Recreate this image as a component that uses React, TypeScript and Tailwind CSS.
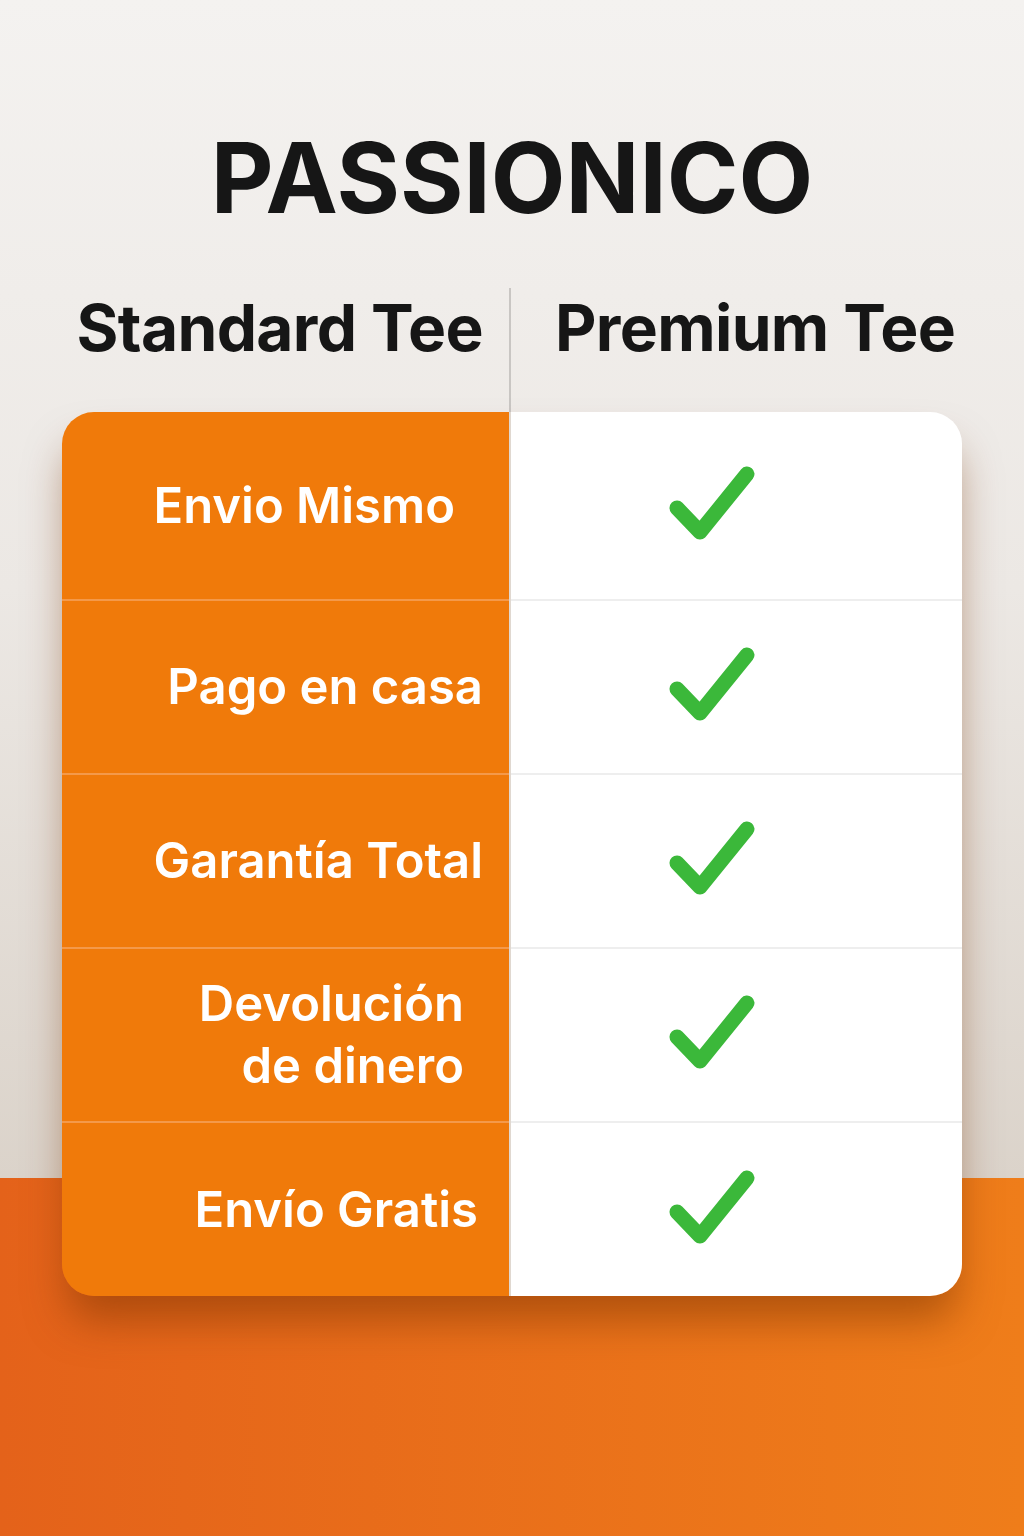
const rows = [
  { label: ["Envio Mismo"], h: "h-[187px]", pr: "pr-[54px]" },
  { label: ["Pago en casa"], h: "h-[174px]", pr: "pr-[26px]" },
  { label: ["Garantía Total"], h: "h-[174px]", pr: "pr-[26px]" },
  { label: ["Devolución", "de dinero"], h: "h-[174px]", pr: "pr-[45px]" },
  { label: ["Envío Gratis"], h: "h-[175px]", pr: "pr-[31px]" },
];

function Check() {
  return (
    <svg width="96" height="84" viewBox="0 0 96 84" className="-ml-[52px] mt-[4px]">
      <path
        d="M14 42 L37 66 L84 8"
        fill="none"
        stroke="#3bb83a"
        strokeWidth="15"
        strokeLinecap="round"
        strokeLinejoin="round"
      />
    </svg>
  );
}

export default function App() {
  return (
    <div
      className="relative w-[1024px] h-[1536px] overflow-hidden"
      style={{ fontFamily: "Inter, 'Noto Sans', sans-serif" }}
    >
      {/* background: light top, orange floor */}
      <div className="absolute inset-0 flex flex-col">
        <div className="h-[1178px] bg-gradient-to-b from-[#f4f2f0] via-[#ece8e4] to-[#dbd3ca]" />
        <div className="flex-1 bg-gradient-to-r from-[#e4621a] to-[#ef7d1a]" />
      </div>

      <div className="relative flex flex-col items-center">
        <h1 className="mt-[128px] text-[97px] leading-[100px] font-bold text-[#161616]">
          PASSIONICO
        </h1>

        <div className="mt-[60px] w-[900px] grid grid-cols-[449px_451px]">
          <div className="h-[124px] pt-[8px] text-right pr-[26px] text-[64px] leading-[64px] font-bold tracking-[-0.01em] text-[#161616] border-r-2 border-[#c9c6c3]">
            Standard Tee
          </div>
          <div className="h-[124px] pt-[8px] pl-[44px] text-[64px] leading-[64px] font-bold tracking-[-0.01em] text-[#161616]">
            Premium Tee
          </div>
        </div>

        <div className="w-[900px] rounded-[32px] overflow-hidden shadow-[0_30px_42px_-6px_rgba(120,50,0,0.5)] grid grid-cols-[449px_451px]">
          <div className="bg-[#f07a0a] border-r-2 border-[#e0d8d0]">
            {rows.map((r, i) => (
              <div
                key={i}
                className={`${r.h} flex flex-col items-end justify-center ${r.pr} ${i > 0 ? "border-t-2 border-[#f4994a]" : ""}`}
              >
                {r.label.map((l, j) => (
                  <div key={j} className="text-[49px] leading-[62px] font-semibold text-white text-right">
                    {l}
                  </div>
                ))}
              </div>
            ))}
          </div>
          <div className="bg-white">
            {rows.map((r, i) => (
              <div
                key={i}
                className={`${r.h} flex items-center justify-center ${i > 0 ? "border-t-2 border-[#eeeeee]" : ""}`}
              >
                <Check />
              </div>
            ))}
          </div>
        </div>
      </div>
    </div>
  );
}
